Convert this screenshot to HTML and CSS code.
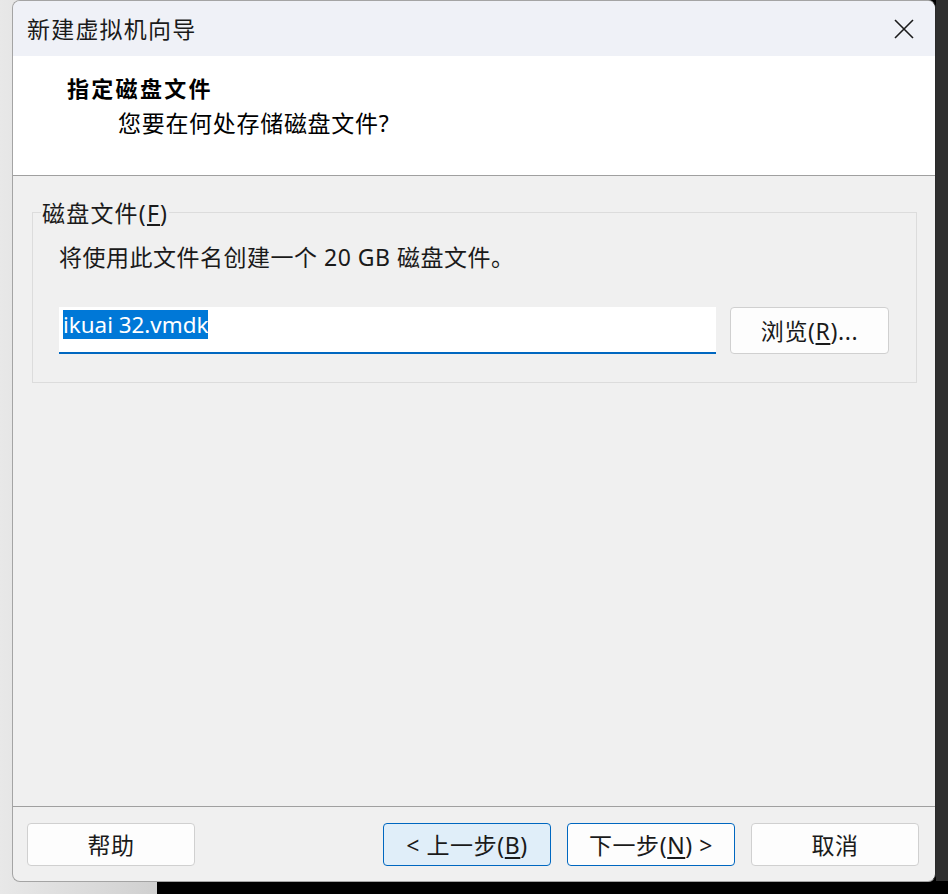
FILE: index.html
```html
<!DOCTYPE html>
<html lang="zh-CN">
<head>
<meta charset="utf-8">
<title>新建虚拟机向导</title>
<link rel="stylesheet" href="styles.css">
</head>
<body>
<div class="window">
  <div class="titlebar">
    <span class="title">新建虚拟机向导</span>
    <span class="close" aria-label="关闭"><svg viewBox="0 0 20 20" width="20" height="20"><path d="M1 1L19 19M19 1L1 19" stroke="#1b1b1b" stroke-width="1.6" fill="none"/></svg></span>
  </div>
  <div class="header">
    <div class="h-title">指定磁盘文件</div>
    <div class="h-sub">您要在何处存储磁盘文件?</div>
  </div>
  <div class="content">
    <div class="group">
      <div class="legend">磁盘文件(<u>F</u>)</div>
      <div class="desc">将使用此文件名创建一个 20 GB 磁盘文件。</div>
      <div class="file-row">
        <div class="input"><span class="sel">ikuai 32.vmdk</span></div>
        <button class="btn browse">浏览(<u>R</u>)...</button>
      </div>
    </div>
  </div>
  <div class="footer">
    <button class="btn fbtn">帮助</button>
    <div class="spacer"></div>
    <button class="btn fbtn back">&lt; 上一步(<u>B</u>)</button>
    <button class="btn fbtn next">下一步(<u>N</u>) &gt;</button>
    <button class="btn fbtn">取消</button>
  </div>
</div>
</body>
</html>
```

FILE: styles.css
```css
html, body {
  margin: 0;
  padding: 0;
}
body {
  width: 948px;
  height: 894px;
  overflow: hidden;
  font-family: "Noto Sans", "Noto Sans CJK SC", sans-serif;
  color: #000;
  background:
    linear-gradient(#2f2f2f, #2f2f2f) right top / 12px 881px no-repeat,
    linear-gradient(to right, #e8e8e8, #d0d0d0) left top / 157px 100% no-repeat,
    #000;
}
.window {
  box-sizing: border-box;
  margin-left: 12px;
  width: 924px;
  height: 882px;
  border: 1px solid #a4a4a4;
  border-right-color: #2a2a2a;
  border-radius: 8px;
  overflow: hidden;
  display: flex;
  flex-direction: column;
  background: #f0f0f0;
}
.titlebar {
  height: 55px;
  flex: none;
  background: #eff1f7;
  display: flex;
  align-items: center;
  justify-content: space-between;
  padding: 0 21px 0 14px;
}
.title {
  font-size: 23px;
  letter-spacing: 1.2px;
  color: #1a1a1a;
  line-height: 30px;
}
.close {
  display: flex;
  width: 20px;
  height: 20px;
}
.header {
  flex: none;
  box-sizing: border-box;
  background: #fff;
  border-bottom: 1px solid #a0a0a0;
  height: 120px;
}
.h-title {
  margin: 17px 0 0 54px;
  font-size: 22px;
  font-weight: bold;
  letter-spacing: 2.3px;
  line-height: 30px;
}
.h-sub {
  margin: 5px 0 0 105px;
  font-size: 23px;
  letter-spacing: 0.7px;
  line-height: 30px;
}
.content {
  flex: 1;
  padding: 36px 18px 0 19px;
}
.group {
  border: 1px solid #dcdcdc;
  padding: 0 27px 28px 26px;
}
.legend {
  width: fit-content;
  margin: -15px 0 0 -18px;
  padding: 0 1px;
  background: #f0f0f0;
  font-size: 23px;
  letter-spacing: 1.2px;
  line-height: 30px;
  color: #1a1a1a;
}
.desc {
  margin-top: 14px;
  font-size: 23px;
  letter-spacing: 0.5px;
  line-height: 30px;
  color: #1a1a1a;
}
.file-row {
  margin-top: 35px;
  display: flex;
  gap: 14px;
  height: 47px;
}
.input {
  flex: 1;
  box-sizing: border-box;
  background: #fff;
  border-bottom: 2px solid #0067c0;
  padding: 3px 4px;
}
.sel {
  display: inline-block;
  background: #0078d7;
  color: #fff;
  font-size: 22.4px;
  line-height: 29px;
  vertical-align: top;
}
.btn {
  box-sizing: border-box;
  background: #fdfdfd;
  border: 1px solid #d0d0d0;
  border-radius: 4px;
  font-family: "Noto Sans", "Noto Sans CJK SC", sans-serif;
  font-size: 23px;
  letter-spacing: 0.6px;
  color: #1a1a1a;
  padding: 0;
  line-height: 30px;
}
.btn u {
  text-underline-offset: 3px;
}
.browse {
  width: 159px;
  height: 47px;
}
.footer {
  flex: none;
  height: 75px;
  box-sizing: border-box;
  border-top: 1px solid #a0a0a0;
  display: flex;
  align-items: flex-start;
  gap: 16px;
  padding: 16px 16px 0 14px;
}
.spacer {
  flex: 1;
}
.fbtn {
  width: 168px;
  height: 43px;
}
.back {
  background: #e0eef9;
  border-color: #0067c0;
}
.next {
  border-color: #0067c0;
}
```
